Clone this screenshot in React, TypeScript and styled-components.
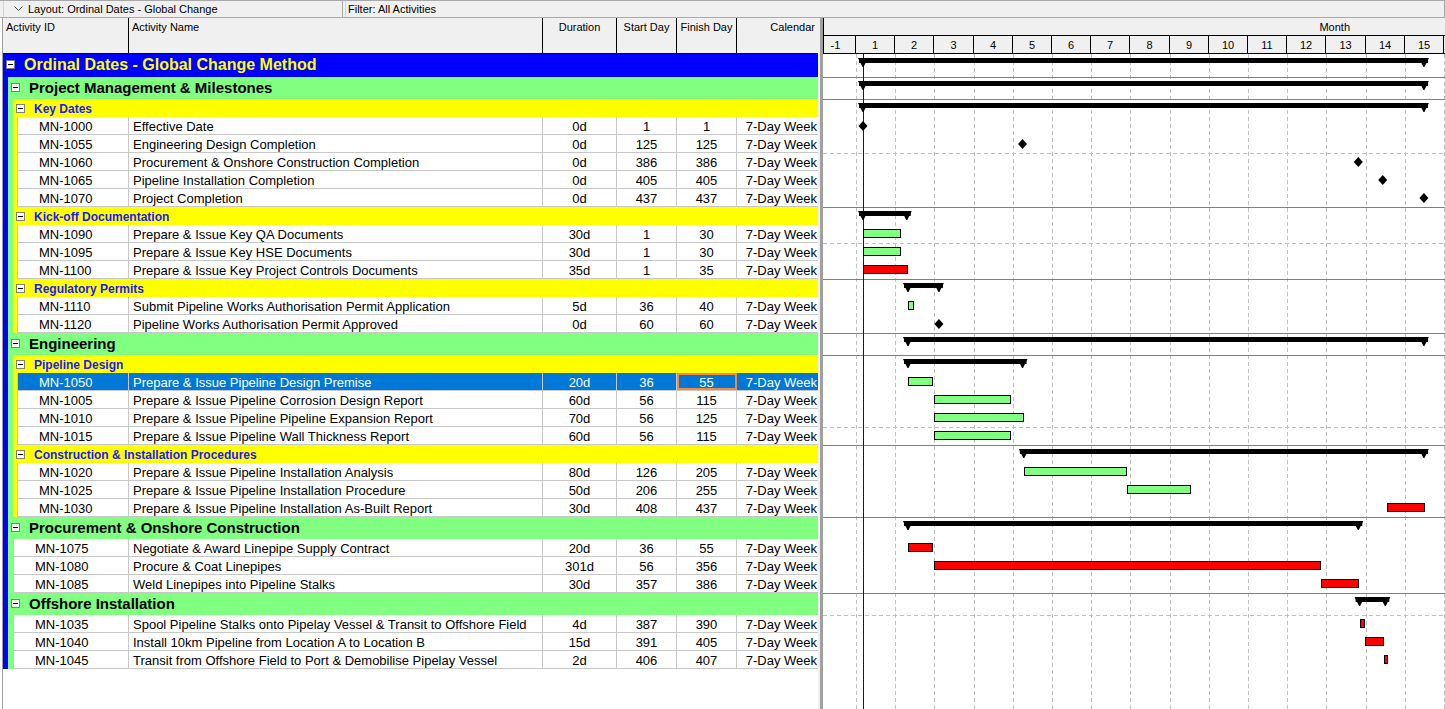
import React from "react";
import styled, { createGlobalStyle } from "styled-components";

// gantt scale: day 1 sits at x=40 inside the chart (863 on screen)
const PX_PER_DAY = 1.2865;
const DAY_ONE_X = 40;
const dayX = (d: number) => DAY_ONE_X + (d - 1) * PX_PER_DAY;

type BandKind = "project" | "wbs" | "sub";
type BarKind = "ms" | "ok" | "crit";

interface BandRow {
  kind: BandKind;
  label: string;
  span: [number, number];
}

interface ActRow {
  kind: "act";
  id: string;
  name: string;
  dur: string;
  start: number;
  finish: number;
  bar: BarKind;
  selected?: boolean;
}

type RowData = BandRow | ActRow;

const band = (kind: BandKind, label: string, s: number, f: number): BandRow => ({
  kind,
  label,
  span: [s, f],
});

const act = (
  id: string,
  name: string,
  dur: string,
  start: number,
  finish: number,
  bar: BarKind,
  selected = false,
): ActRow => ({ kind: "act", id, name, dur, start, finish, bar, selected });

const rows: RowData[] = [
  band("project", "Ordinal Dates - Global Change Method", 1, 437),
  band("wbs", "Project Management & Milestones", 1, 437),
  band("sub", "Key Dates", 1, 437),
  act("MN-1000", "Effective Date", "0d", 1, 1, "ms"),
  act("MN-1055", "Engineering Design Completion", "0d", 125, 125, "ms"),
  act("MN-1060", "Procurement & Onshore Construction Completion", "0d", 386, 386, "ms"),
  act("MN-1065", "Pipeline Installation Completion", "0d", 405, 405, "ms"),
  act("MN-1070", "Project Completion", "0d", 437, 437, "ms"),
  band("sub", "Kick-off Documentation", 1, 35),
  act("MN-1090", "Prepare & Issue Key QA Documents", "30d", 1, 30, "ok"),
  act("MN-1095", "Prepare & Issue Key HSE Documents", "30d", 1, 30, "ok"),
  act("MN-1100", "Prepare & Issue Key Project Controls Documents", "35d", 1, 35, "crit"),
  band("sub", "Regulatory Permits", 36, 60),
  act("MN-1110", "Submit Pipeline Works Authorisation Permit Application", "5d", 36, 40, "ok"),
  act("MN-1120", "Pipeline Works Authorisation Permit Approved", "0d", 60, 60, "ms"),
  band("wbs", "Engineering", 36, 437),
  band("sub", "Pipeline Design", 36, 125),
  act("MN-1050", "Prepare & Issue Pipeline Design Premise", "20d", 36, 55, "ok", true),
  act("MN-1005", "Prepare & Issue Pipeline Corrosion Design Report", "60d", 56, 115, "ok"),
  act("MN-1010", "Prepare & Issue Pipeline Pipeline Expansion Report", "70d", 56, 125, "ok"),
  act("MN-1015", "Prepare & Issue Pipeline Wall Thickness Report", "60d", 56, 115, "ok"),
  band("sub", "Construction & Installation Procedures", 126, 437),
  act("MN-1020", "Prepare & Issue Pipeline Installation Analysis", "80d", 126, 205, "ok"),
  act("MN-1025", "Prepare & Issue Pipeline Installation Procedure", "50d", 206, 255, "ok"),
  act("MN-1030", "Prepare & Issue Pipeline Installation As-Built Report", "30d", 408, 437, "crit"),
  band("wbs", "Procurement & Onshore Construction", 36, 386),
  act("MN-1075", "Negotiate & Award Linepipe Supply Contract", "20d", 36, 55, "crit"),
  act("MN-1080", "Procure & Coat Linepipes", "301d", 56, 356, "crit"),
  act("MN-1085", "Weld Linepipes into Pipeline Stalks", "30d", 357, 386, "crit"),
  band("wbs", "Offshore Installation", 387, 407),
  act("MN-1035", "Spool Pipeline Stalks onto Pipelay Vessel & Transit to Offshore Field", "4d", 387, 390, "crit"),
  act("MN-1040", "Install 10km Pipeline from Location A to Location B", "15d", 391, 405, "crit"),
  act("MN-1045", "Transit from Offshore Field to Port & Demobilise Pipelay Vessel", "2d", 406, 407, "crit"),
];

const bandDepth: Record<BandKind, number> = { project: 0, wbs: 1, sub: 2 };
const rowHeights = { project: 23, wbs: 22, sub: 18, act: 18 };

const levelColors = ["#0000ff", "#80ff80", "#ffff00"];
const levelWidths = [5, 5, 4];

const bandStyle: Record<BandKind, { bg: string; fg: string; size: number; pt: number; pb: number }> = {
  project: { bg: "#0000ff", fg: "#ffff00", size: 16, pt: 0, pb: 2 },
  wbs: { bg: "#80ff80", fg: "#000000", size: 15, pt: 0, pb: 2 },
  sub: { bg: "#ffff00", fg: "#1a1aff", size: 12, pt: 1, pb: 0 },
};

// lay the rows out once: depth of each row and its top inside the body
const layout = (() => {
  let depth = 0;
  let top = 0;
  return rows.map((r) => {
    const d = r.kind === "act" ? depth + 1 : bandDepth[r.kind];
    if (r.kind !== "act") depth = bandDepth[r.kind];
    const h = rowHeights[r.kind];
    const item = { row: r, depth: d, top, height: h };
    top += h;
    return item;
  });
})();

const scaleLabels = ["-1", "1", "2", "3", "4", "5", "6", "7", "8", "9", "10", "11", "12", "13", "14", "15"];
const monthEdge = (n: number) => Math.round(33 + n * 39.2);

const GlobalStyle = createGlobalStyle`
  *, *::before, *::after { box-sizing: border-box; }
  html, body { margin: 0; padding: 0; background: #ffffff; }
  body {
    font-family: "Liberation Sans", Arial, sans-serif;
    color: #000;
  }
`;

const Screen = styled.div`
  width: 1445px;
  height: 709px;
  display: flex;
  flex-direction: column;
  overflow: hidden;
  background: #fff;
`;

const TopBar = styled.div`
  height: 18px;
  display: flex;
  background: #f0f0f0;
  border-top: 1px solid #a9a9a9;
  border-bottom: 1px solid #a9a9a9;
  font-size: 11px;
  color: #000;
`;

const TopBox = styled.div<{ $w?: number; $pl: number; $ml: number }>`
  width: ${(p) => (p.$w ? `${p.$w}px` : "auto")};
  flex: ${(p) => (p.$w ? "none" : 1)};
  margin-left: ${(p) => p.$ml}px;
  padding-left: ${(p) => p.$pl}px;
  display: flex;
  align-items: center;
  gap: 5px;
  border-left: 1px solid #d4d4d4;
  border-right: 1px solid #a9a9a9;
  white-space: nowrap;
`;

const Main = styled.div`
  flex: 1;
  min-height: 0;
  display: flex;
`;

const TablePane = styled.div`
  width: 816px;
  margin-left: 2px;
  border-left: 1px solid #a0a0a0;
  display: flex;
  flex-direction: column;
`;

const HeaderRow = styled.div`
  height: 36px;
  display: flex;
  background: #f0f0f0;
  border-bottom: 1px solid #000;
  font-size: 11px;
`;

const HeaderCell = styled.div<{ $w?: number; $align: string; $last?: boolean }>`
  width: ${(p) => (p.$w ? `${p.$w}px` : "auto")};
  flex: ${(p) => (p.$w ? "none" : 1)};
  text-align: ${(p) => p.$align};
  padding: 3px 3px 0;
  border-right: ${(p) => (p.$last ? "none" : "1px solid #000")};
  white-space: nowrap;
`;

const Body = styled.div`
  display: flex;
  flex-direction: column;
`;

const Row = styled.div<{ $h: number }>`
  height: ${(p) => p.$h}px;
  display: flex;
`;

const Stripe = styled.div<{ $color: string; $w: number }>`
  width: ${(p) => p.$w}px;
  flex: none;
  background: ${(p) => p.$color};
`;

const BandBody = styled.div<{ $bg: string; $fg: string; $size: number; $pt: number; $pb: number }>`
  flex: 1;
  display: flex;
  align-items: center;
  padding-left: 3px;
  padding-top: ${(p) => p.$pt}px;
  padding-bottom: ${(p) => p.$pb}px;
  gap: 9px;
  background: ${(p) => p.$bg};
  color: ${(p) => p.$fg};
  font-size: ${(p) => p.$size}px;
  font-weight: bold;
  white-space: nowrap;
`;

const MinusBox = styled.span`
  width: 9px;
  height: 9px;
  flex: none;
  background: #fff;
  border: 1px solid #808080;
  position: relative;

  &::after {
    content: "";
    position: absolute;
    left: 1px;
    right: 1px;
    top: 3px;
    height: 1px;
    background: #000;
  }
`;

const ActBody = styled.div<{ $selected?: boolean }>`
  flex: 1;
  display: flex;
  border-left: 1px solid #c8c8c8;
  border-bottom: 1px solid #c8c8c8;
  background: ${(p) => (p.$selected ? "#0078d7" : "#fff")};
  color: ${(p) => (p.$selected ? "#fff" : "#000")};
  font-size: 13px;
  line-height: 15px;
`;

const Cell = styled.div<{ $w?: number; $align: string; $pl?: number; $pr?: number; $focus?: boolean; $last?: boolean }>`
  width: ${(p) => (p.$w ? `${p.$w}px` : "auto")};
  flex: ${(p) => (p.$w ? "none" : 1)};
  min-width: 0;
  text-align: ${(p) => p.$align};
  padding-top: 2px;
  padding-left: ${(p) => p.$pl ?? 0}px;
  padding-right: ${(p) => p.$pr ?? 0}px;
  border-right: ${(p) => (p.$last ? "none" : "1px solid #c8c8c8")};
  outline: ${(p) => (p.$focus ? "2px solid #f28a3b" : "none")};
  outline-offset: -2px;
  white-space: nowrap;
  overflow: hidden;
`;

const Splitter = styled.div`
  width: 5px;
  flex: none;
  background: #a0a0a0;
  border-left: 2px solid #f0f0f0;
`;

const GanttPane = styled.div`
  flex: 1;
  display: flex;
  flex-direction: column;
  min-width: 0;
`;

const GanttHeader = styled.div`
  background: #f0f0f0;
  font-size: 11px;
  border-left: 1px solid #000;
`;

const MonthRow = styled.div`
  height: 18px;
  display: flex;
  align-items: center;
  justify-content: flex-end;
  padding-right: 95px;
  border-bottom: 1px solid #000;
`;

const ScaleRow = styled.div`
  height: 18px;
  display: flex;
  border-bottom: 1px solid #000;
`;

// the first month cell is partly scrolled off to the left, so its label sits left of centre
const ScaleCell = styled.div<{ $w: number; $clip?: number }>`
  width: ${(p) => p.$w}px;
  flex: none;
  display: flex;
  align-items: center;
  justify-content: center;
  padding-right: ${(p) => p.$clip ?? 0}px;
  border-right: 1px solid #000;
`;

const GanttBody = styled.div`
  flex: 1;
  min-height: 0;
  overflow: hidden;
`;

function Chevron() {
  return (
    <svg width="9" height="6" viewBox="0 0 9 6">
      <polyline points="0.5,0.5 4.5,4.5 8.5,0.5" fill="none" stroke="#404040" strokeWidth="1" />
    </svg>
  );
}

function Stripes({ depth }: { depth: number }) {
  return (
    <>
      {levelColors.slice(0, depth).map((c, i) => (
        <Stripe key={i} $color={c} $w={levelWidths[i]} />
      ))}
    </>
  );
}

function TableRow({ row, depth, height }: { row: RowData; depth: number; height: number }) {
  if (row.kind !== "act") {
    const s = bandStyle[row.kind];
    return (
      <Row $h={height}>
        <Stripes depth={depth} />
        <BandBody $bg={s.bg} $fg={s.fg} $size={s.size} $pt={s.pt} $pb={s.pb}>
          <MinusBox />
          {row.label}
        </BandBody>
      </Row>
    );
  }
  return (
    <Row $h={height}>
      <Stripes depth={depth} />
      <ActBody $selected={row.selected}>
        <Cell $align="left" $pl={21}>{row.id}</Cell>
        <Cell $w={414} $align="left" $pl={4}>{row.name}</Cell>
        <Cell $w={74} $align="center">{row.dur}</Cell>
        <Cell $w={60} $align="center">{row.start}</Cell>
        <Cell $w={60} $align="center" $focus={row.selected}>{row.finish}</Cell>
        <Cell $w={81} $align="right" $pr={1} $last>7-Day Week</Cell>
      </ActBody>
    </Row>
  );
}

function SummaryBar({ s, f, top }: { s: number; f: number; top: number }) {
  const x1 = dayX(s);
  const x2 = dayX(f);
  const y = top + 4;
  return (
    <g fill="#000">
      <rect x={x1 - 4} y={y} width={x2 - x1 + 8} height={5} />
      <polygon points={`${x1 - 5},${y} ${x1 + 5},${y} ${x1 + 0.5},${y + 9} ${x1 - 0.5},${y + 9}`} />
      <polygon points={`${x2 - 5},${y} ${x2 + 5},${y} ${x2 + 0.5},${y + 9} ${x2 - 0.5},${y + 9}`} />
    </g>
  );
}

function ActivityBar({ row, top }: { row: ActRow; top: number }) {
  if (row.bar === "ms") {
    const cx = dayX(row.finish);
    const cy = top + 9;
    return <polygon points={`${cx},${cy - 5} ${cx + 4.5},${cy} ${cx},${cy + 5} ${cx - 4.5},${cy}`} fill="#000" />;
  }
  const x1 = dayX(row.start);
  const w = Math.max(3, dayX(row.finish) - x1);
  return (
    <rect
      x={Math.round(x1) + 0.5}
      y={top + 4.5}
      width={Math.round(w)}
      height={8}
      fill={row.bar === "crit" ? "#ff0000" : "#80ff80"}
      stroke="#000"
      strokeWidth={1}
    />
  );
}

function GanttChart() {
  const width = 622;
  const height = 655;
  return (
    <svg width={width} height={height} style={{ display: "block" }}>
      {scaleLabels.map((_, n) => (
        <line
          key={`v${n}`}
          x1={monthEdge(n) + 0.5}
          x2={monthEdge(n) + 0.5}
          y1={0}
          y2={height}
          stroke="#c0c0c0"
          strokeDasharray="4 3"
          shapeRendering="crispEdges"
        />
      ))}
      {layout.map((item, i) => {
        if (i === 0) return null;
        const isBand = item.row.kind !== "act";
        if (isBand) {
          return (
            <line key={`h${i}`} x1={0} x2={width} y1={item.top + 0.5} y2={item.top + 0.5} stroke="#808080" shapeRendering="crispEdges" />
          );
        }
        // sight line every fifth row
        if (i % 5 === 0) {
          return (
            <line
              key={`h${i}`}
              x1={0}
              x2={width}
              y1={item.top + 0.5}
              y2={item.top + 0.5}
              stroke="#c0c0c0"
              strokeDasharray="4 3"
              shapeRendering="crispEdges"
            />
          );
        }
        return null;
      })}
      <line x1={DAY_ONE_X + 0.5} x2={DAY_ONE_X + 0.5} y1={0} y2={height} stroke="#0000ff" shapeRendering="crispEdges" />
      {layout.map((item, i) =>
        item.row.kind === "act" ? (
          <ActivityBar key={`b${i}`} row={item.row} top={item.top} />
        ) : (
          <SummaryBar key={`b${i}`} s={item.row.span[0]} f={item.row.span[1]} top={item.top} />
        ),
      )}
    </svg>
  );
}

export default function App() {
  return (
    <>
      <GlobalStyle />
      <Screen>
        <TopBar>
          <TopBox $w={340} $ml={3} $pl={10}>
            <Chevron />
            Layout: Ordinal Dates - Global Change
          </TopBox>
          <TopBox $ml={2} $pl={2}>
            Filter: All Activities
          </TopBox>
        </TopBar>
        <Main>
          <TablePane>
            <HeaderRow>
              <HeaderCell $align="left">Activity ID</HeaderCell>
              <HeaderCell $w={414} $align="left">Activity Name</HeaderCell>
              <HeaderCell $w={74} $align="center">Duration</HeaderCell>
              <HeaderCell $w={60} $align="center">Start Day</HeaderCell>
              <HeaderCell $w={60} $align="center">Finish Day</HeaderCell>
              <HeaderCell $w={81} $align="right" $last>Calendar</HeaderCell>
            </HeaderRow>
            <Body>
              {layout.map((item, i) => (
                <TableRow key={i} row={item.row} depth={item.depth} height={item.height} />
              ))}
            </Body>
          </TablePane>
          <Splitter />
          <GanttPane>
            <GanttHeader>
              <MonthRow>Month</MonthRow>
              <ScaleRow>
                {scaleLabels.map((label, n) => (
                  <ScaleCell
                    key={label}
                    $w={n === 0 ? monthEdge(0) - 1 : monthEdge(n) - monthEdge(n - 1)}
                    $clip={n === 0 ? 8 : 0}
                  >
                    {label}
                  </ScaleCell>
                ))}
              </ScaleRow>
            </GanttHeader>
            <GanttBody>
              <GanttChart />
            </GanttBody>
          </GanttPane>
        </Main>
      </Screen>
    </>
  );
}
